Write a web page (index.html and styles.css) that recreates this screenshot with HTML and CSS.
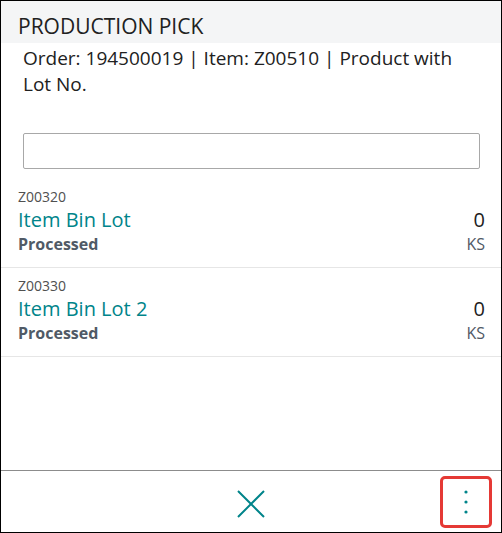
FILE: index.html
```html
<!DOCTYPE html>
<html>
<head>
<meta charset="utf-8">
<link rel="stylesheet" href="styles.css">
</head>
<body>
<div class="frame">
  <div class="header">PRODUCTION PICK</div>
  <div class="order">Order: 194500019 | Item: Z00510 | Product with Lot No.</div>
  <div class="search-wrap"><input class="search" type="text"></div>
  <div class="list">
    <div class="row">
      <div class="code">Z00320</div>
      <div class="name">Item Bin Lot</div>
      <div class="qty">0</div>
      <div class="status">Processed</div>
      <div class="unit">KS</div>
    </div>
    <div class="row">
      <div class="code">Z00330</div>
      <div class="name">Item Bin Lot 2</div>
      <div class="qty">0</div>
      <div class="status">Processed</div>
      <div class="unit">KS</div>
    </div>
  </div>
  <div class="footer">
    <div class="spacer"></div>
    <button class="close-btn" aria-label="Close">
      <svg width="28" height="28" viewBox="0 0 28 28"><path d="M1 1 L27 27 M27 1 L1 27" stroke="#00848a" stroke-width="2" fill="none"/></svg>
    </button>
    <button class="more-btn" aria-label="More">
      <svg width="6" height="26" viewBox="0 0 6 26"><circle cx="3" cy="3" r="1.6" fill="#00848a"/><circle cx="3" cy="13" r="1.6" fill="#00848a"/><circle cx="3" cy="23" r="1.6" fill="#00848a"/></svg>
    </button>
  </div>
</div>
</body>
</html>
```
FILE: styles.css
```css
* { box-sizing: border-box; }
html, body { margin: 0; padding: 0; }
body {
  font-family: "Open Sans", "Noto Sans", sans-serif;
  color: #212121;
  background: #fff;
}
.frame {
  width: 502px;
  height: 533px;
  border: 1px solid #000;
  display: flex;
  flex-direction: column;
}
.header {
  height: 42px;
  background: #f4f5f6;
  padding: 12px 0 0 17px;
  font-size: 21px;
  line-height: 26px;
  color: #212121;
}
.order {
  padding: 2px 30px 0 22px;
  font-size: 19px;
  line-height: 26px;
  color: #212121;
}
.search-wrap {
  padding: 36px 21px 10px 22px;
}
.search {
  display: block;
  width: 100%;
  height: 36px;
  border: 1px solid #a8a8a8;
  border-radius: 2px;
  background: #fff;
  margin: 0;
  padding: 0 8px;
  font: inherit;
}
.list {
  flex: 1;
}
.row {
  display: grid;
  grid-template-columns: 1fr auto;
  padding: 8px 16px 12px 17px;
  border-bottom: 1px solid #e6e6e6;
}
.code {
  grid-column: 1 / 3;
  font-size: 14px;
  line-height: 20px;
  color: #505050;
}
.name {
  font-size: 20px;
  line-height: 26px;
  color: #00848a;
}
.qty {
  font-size: 20px;
  line-height: 26px;
  color: #212121;
  text-align: right;
}
.status {
  font-size: 16px;
  line-height: 22px;
  font-weight: 700;
  color: #505a66;
}
.unit {
  font-size: 16px;
  line-height: 22px;
  color: #505a66;
  text-align: right;
}
.footer {
  height: 62px;
  border-top: 1px solid #8c8c8c;
  display: grid;
  grid-template-columns: 1fr auto 1fr;
  align-items: center;
}
.close-btn, .more-btn {
  background: none;
  border: none;
  padding: 0;
  margin: 0;
  display: flex;
  align-items: center;
  justify-content: center;
  cursor: pointer;
}
.close-btn {
  width: 30px;
  height: 30px;
  margin-top: 4px;
}
.more-btn {
  justify-self: end;
  width: 52px;
  height: 52px;
  margin-right: 9px;
  border: 3px solid #e53935;
  border-radius: 5px;
}
```
